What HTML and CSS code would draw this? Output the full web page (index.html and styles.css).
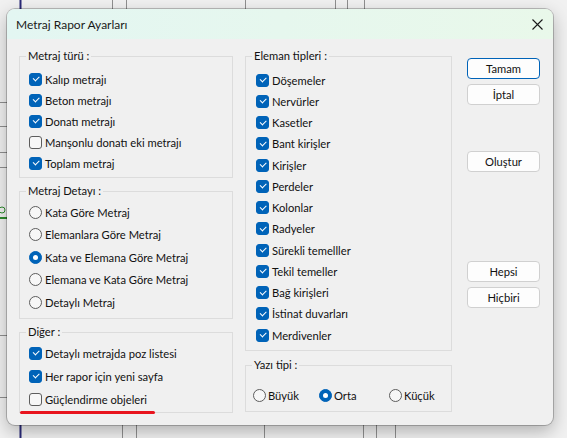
FILE: index.html
```html
<!DOCTYPE html>
<html lang="tr">
<head>
    <meta charset="UTF-8">
    <meta name="viewport" content="width=device-width, initial-scale=1.0">
    <title>Metraj Rapor Ayarları</title>
    <link rel="stylesheet" href="styles.css">
</head>
<body>

<!-- drawing area behind the dialog -->
<svg class="backdrop" width="567" height="438" viewBox="0 0 567 438">
    <rect width="567" height="438" fill="#f1f1f1"/>
    <g stroke="#8f8f8f" stroke-width="1">
        <line x1="112.5" y1="0" x2="112.5" y2="12"/>
        <line x1="126.5" y1="0" x2="126.5" y2="12"/>
        <line x1="245.5" y1="0" x2="245.5" y2="12"/>
        <line x1="335.5" y1="0" x2="335.5" y2="12"/>
        <line x1="347.5" y1="0" x2="347.5" y2="12"/>
        <line x1="364.5" y1="0" x2="364.5" y2="12"/>
        <line x1="122.5" y1="420" x2="122.5" y2="438"/>
        <line x1="136.5" y1="420" x2="136.5" y2="438"/>
        <line x1="264.5" y1="420" x2="264.5" y2="438"/>
        <line x1="363.5" y1="420" x2="363.5" y2="438"/>
        <line x1="376.5" y1="420" x2="376.5" y2="438"/>
        <line x1="395.5" y1="420" x2="395.5" y2="438"/>
        <line x1="0" y1="102.5" x2="12" y2="102.5"/>
        <line x1="0" y1="126.5" x2="12" y2="126.5"/>
        <line x1="0" y1="152.5" x2="12" y2="152.5"/>
        <line x1="0" y1="167.5" x2="12" y2="167.5"/>
        <line x1="0" y1="335.5" x2="12" y2="335.5"/>
        <line x1="0" y1="397.5" x2="12" y2="397.5"/>
    </g>
    <line x1="0" y1="218" x2="10" y2="218" stroke="#2e8b2e" stroke-width="2"/>
    <circle cx="2" cy="210" r="3" fill="none" stroke="#2e8b2e" stroke-width="1"/>
    <line x1="20.5" y1="0" x2="20.5" y2="438" stroke="#2a2a78" stroke-width="2"/>
</svg>

<div class="dialog">
    <div class="titlebar">
        <span class="title">Metraj Rapor Ayarları</span>
        <svg class="close" width="11" height="11" viewBox="0 0 11 11">
            <path d="M0.5 0.5 L10.5 10.5 M10.5 0.5 L0.5 10.5" stroke="#1a1a1a" stroke-width="1.1" fill="none"/>
        </svg>
    </div>

    <div class="content">
        <div class="col col-left">
            <div class="group g-type">
                <span class="legend">Metraj türü :</span>
                <div class="opt"><span class="box on"></span>Kalıp metrajı</div>
                <div class="opt"><span class="box on"></span>Beton metrajı</div>
                <div class="opt"><span class="box on"></span>Donatı metrajı</div>
                <div class="opt"><span class="box"></span>Manşonlu donatı eki metrajı</div>
                <div class="opt"><span class="box on"></span>Toplam metraj</div>
            </div>

            <div class="group g-detail">
                <span class="legend">Metraj Detayı :</span>
                <div class="opt"><span class="radio"></span>Kata Göre Metraj</div>
                <div class="opt"><span class="radio"></span>Elemanlara Göre Metraj</div>
                <div class="opt"><span class="radio on"></span>Kata ve Elemana Göre Metraj</div>
                <div class="opt"><span class="radio"></span>Elemana ve Kata Göre Metraj</div>
                <div class="opt"><span class="radio"></span>Detaylı Metraj</div>
            </div>

            <div class="group g-other">
                <span class="legend">Diğer :</span>
                <div class="opt"><span class="box on"></span>Detaylı metrajda poz listesi</div>
                <div class="opt"><span class="box on"></span>Her rapor için yeni sayfa</div>
                <div class="opt"><span class="box"></span>Güçlendirme objeleri</div>
            </div>
        </div>

        <div class="col col-mid">
            <div class="group g-elements">
                <span class="legend">Eleman tipleri :</span>
                <div class="opt"><span class="box on"></span>Döşemeler</div>
                <div class="opt"><span class="box on"></span>Nervürler</div>
                <div class="opt"><span class="box on"></span>Kasetler</div>
                <div class="opt"><span class="box on"></span>Bant kirişler</div>
                <div class="opt"><span class="box on"></span>Kirişler</div>
                <div class="opt"><span class="box on"></span>Perdeler</div>
                <div class="opt"><span class="box on"></span>Kolonlar</div>
                <div class="opt"><span class="box on"></span>Radyeler</div>
                <div class="opt"><span class="box on"></span>Sürekli temelller</div>
                <div class="opt"><span class="box on"></span>Tekil temeller</div>
                <div class="opt"><span class="box on"></span>Bağ kirişleri</div>
                <div class="opt"><span class="box on"></span>İstinat duvarları</div>
                <div class="opt"><span class="box on"></span>Merdivenler</div>
            </div>

            <div class="group g-font">
                <span class="legend">Yazı tipi :</span>
                <div class="font-row">
                    <div class="opt"><span class="radio"></span>Büyük</div>
                    <div class="opt"><span class="radio on"></span>Orta</div>
                    <div class="opt"><span class="radio"></span>Küçük</div>
                </div>
            </div>
        </div>

        <div class="col col-buttons">
            <button class="btn default">Tamam</button>
            <button class="btn">İptal</button>
            <button class="btn btn-build">Oluştur</button>
            <button class="btn btn-all">Hepsi</button>
            <button class="btn">Hiçbiri</button>
        </div>
    </div>

    <!-- red underline mark -->
    <div class="mark"></div>
</div>

</body>
</html>
```

FILE: styles.css
```css
body {
    margin: 0;
    width: 567px;
    height: 438px;
    overflow: hidden;
    position: relative;
    font-family: Lato, "Noto Sans", sans-serif;
    font-size: 11.2px;
    color: #111;
    background-color: #f1f1f1;
}
.backdrop {
    position: absolute;
    left: 0;
    top: 0;
}
.dialog {
    position: absolute;
    left: 7px;
    top: 9px;
    width: 546px;
    height: 416px;
    background-color: #f0f0f0;
    border-radius: 8px;
    box-shadow: 0 0 0 1px rgba(0, 0, 0, 0.22), 0 6px 18px rgba(0, 0, 0, 0.28);
    overflow: hidden;
}
.titlebar {
    height: 30px;
    display: flex;
    align-items: center;
    justify-content: space-between;
    padding: 0 10px 0 9px;
    background: linear-gradient(90deg, #e3f6f2, #e9f8ea);
}
.title {
    font-size: 12px;
    color: #1a1a1a;
}
.close {
    display: block;
}
.content {
    display: flex;
    padding: 17px 0 0 12px;
}
.col {
    display: flex;
    flex-direction: column;
}
.col-left {
    width: 214px;
    gap: 13px;
}
.col-mid {
    width: 207px;
    margin-left: 12px;
    gap: 14px;
}
.col-buttons {
    width: 73px;
    margin-left: 15px;
    padding-top: 2px;
}
.group {
    position: relative;
    box-sizing: border-box;
    border: 1px solid #dcdcdc;
    padding-left: 9px;
}
.legend {
    position: absolute;
    top: -9px;
    left: 6px;
    padding: 0 2px;
    line-height: 16px;
    background-color: #f0f0f0;
}
.opt {
    display: flex;
    align-items: center;
    gap: 3px;
    white-space: nowrap;
}
.g-type {
    height: 122px;
    padding-top: 11.5px;
}
.g-type .opt {
    height: 21px;
}
.g-detail {
    height: 128px;
    padding-top: 8.75px;
}
.g-detail .opt {
    height: 22.5px;
}
.g-other {
    height: 81px;
    padding-top: 8.5px;
}
.g-other .opt {
    height: 23px;
}
.g-elements {
    height: 295px;
    padding-top: 12.4px;
    padding-left: 10px;
}
.g-elements .opt {
    height: 21.25px;
}
.g-font {
    height: 47px;
    padding-top: 19px;
    padding-left: 7px;
}
.font-row {
    display: grid;
    grid-template-columns: 66px 70px auto;
}
.font-row .opt {
    height: 20px;
    gap: 2px;
}

/* checkbox */
.box {
    position: relative;
    flex: none;
    box-sizing: border-box;
    width: 13px;
    height: 13px;
    border: 1px solid #5d5d5d;
    border-radius: 3px;
    background-color: #f7f7f7;
}
.box.on {
    border-color: #0063b8;
    background-color: #0063b8;
}
.box.on::after {
    content: "";
    position: absolute;
    left: 3px;
    top: 2.5px;
    width: 5px;
    height: 2.5px;
    border-left: 1px solid #fff;
    border-bottom: 1px solid #fff;
    transform: rotate(-45deg);
}

/* radio */
.radio {
    position: relative;
    flex: none;
    box-sizing: border-box;
    width: 13px;
    height: 13px;
    border: 1px solid #5d5d5d;
    border-radius: 50%;
    background-color: #f7f7f7;
}
.radio.on {
    border-color: #0063b8;
    background-color: #0063b8;
}
.radio.on::after {
    content: "";
    position: absolute;
    left: 3px;
    top: 3px;
    width: 5px;
    height: 5px;
    border-radius: 50%;
    background-color: #fff;
}

/* buttons */
.btn {
    box-sizing: border-box;
    width: 73px;
    height: 21px;
    margin-bottom: 5px;
    padding: 0;
    font-family: inherit;
    font-size: 11.2px;
    color: #111;
    background-color: #fdfdfd;
    border: 1px solid #d0d0d0;
    border-radius: 4px;
}
.btn.default {
    border-color: #0063b8;
}
.btn-build {
    margin-top: 41px;
}
.btn-all {
    margin-top: 84px;
}

.mark {
    position: absolute;
    left: 13px;
    top: 402px;
    width: 135px;
    height: 3px;
    border-radius: 2px;
    background-color: #e8141e;
}
```
